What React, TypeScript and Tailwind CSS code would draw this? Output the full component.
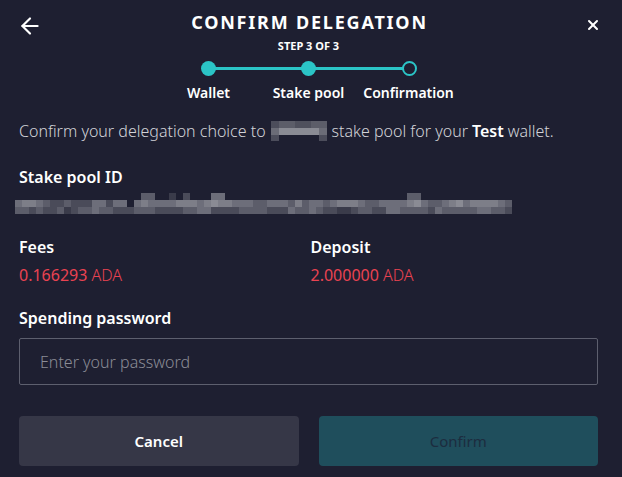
import { ArrowLeft, X } from "lucide-react";

const steps = ["Wallet", "Stake pool", "Confirmation"];

const greys = ["#1e1f31", "#3a3b4a", "#4a4b59", "#5c5d6a", "#6d6e7a", "#7d7e88", "#8a8b94"];

// blurred stake pool id, 3 rows of 7px blocks
const idRows = [
  "00000000000000000033001020004400000000000000000000000000330000000000000",
  "45543223222442440454444555456554443344435344345554334444564334564555543",
  "33232231233433222333222233442222333322243343221123322443333243333344332",
];

function Pixels({ rows }: { rows: string[] }) {
  return (
    <div className="flex flex-col">
      {rows.map((row, r) => (
        <div key={r} className="flex">
          {row.split("").map((c, i) => (
            <div key={i} className="w-[7px] h-[7px]" style={{ background: greys[Number(c)] }} />
          ))}
        </div>
      ))}
    </div>
  );
}

function Amount({ value }: { value: string }) {
  return (
    <p className="mt-[8px] text-[16px] leading-[20px] text-[#ea4352]">
      {value} <span className="font-light">ADA</span>
    </p>
  );
}

export default function App() {
  return (
    <div className="w-[622px] h-[477px] bg-[#1e1f31] text-white font-['Noto_Sans',sans-serif] pl-[19px] pr-[24px] overflow-hidden">
      <div className="grid grid-cols-[40px_1fr_40px] items-start pt-[10px]">
        <ArrowLeft size={26} strokeWidth={2} className="mt-[3px] -ml-[2px]" />
        <div className="flex flex-col items-center">
          <h1 className="text-[18px] leading-[24px] font-bold tracking-[1.8px] pl-[2px]">CONFIRM DELEGATION</h1>
          <p className="text-[11px] leading-[14px] font-bold mt-[5px]">STEP 3 OF 3</p>
        </div>
        <X size={16} strokeWidth={3} className="justify-self-end mt-[7px] -mr-[3px]" />
      </div>

      <div className="flex justify-center mt-[7px]">
        <div className="relative w-[216px] h-[16px] flex items-center justify-between">
          <div className="absolute left-[8px] right-[8px] top-[7px] h-[3px] bg-[#2bc4c6]" />
          <div className="relative w-[15px] h-[15px] rounded-full bg-[#2bc4c6]" />
          <div className="relative w-[15px] h-[15px] rounded-full bg-[#2bc4c6]" />
          <div className="relative w-[15px] h-[15px] rounded-full bg-[#1e1f31] border-2 border-[#2bc4c6]" />
        </div>
      </div>
      <div className="flex justify-center mt-[8px]">
        <div className="grid grid-cols-3 w-[300px]">
          {steps.map((s) => (
            <span key={s} className="text-center text-[14px] leading-[18px] font-semibold">
              {s}
            </span>
          ))}
        </div>
      </div>

      <p className="mt-[19px] text-[16px] leading-[20px] font-light text-[#d2d3d8] flex items-center">
        Confirm your delegation choice to
        <span className="inline-flex mx-[5px] h-[20px] w-[56px] flex-col">
          <span className="flex h-[7px]">
            <span className="w-[8px] bg-[#4c4d5b]" />
            <span className="w-[16px] bg-[#5c5d69]" />
            <span className="w-[16px] bg-[#4f505d]" />
            <span className="w-[16px] bg-[#5c5d69]" />
          </span>
          <span className="flex h-[7px]">
            <span className="w-[8px] bg-[#6b6c77]" />
            <span className="w-[40px] bg-[#8a8b94]" />
            <span className="w-[8px] bg-[#6b6c77]" />
          </span>
          <span className="flex h-[6px]">
            <span className="w-[8px] bg-[#4c4d5b]" />
            <span className="w-[40px] bg-[#1e1f31]" />
            <span className="w-[8px] bg-[#4c4d5b]" />
          </span>
        </span>
        stake pool for your <b className="font-semibold text-white mx-[4px]">Test</b> wallet.
      </p>

      <h2 className="mt-[26px] text-[16px] leading-[20px] font-semibold">Stake pool ID</h2>
      <div className="mt-[6px] -ml-[4px]">
        <Pixels rows={idRows} />
      </div>

      <div className="grid grid-cols-2 mt-[23px]">
        <div>
          <h3 className="text-[16px] leading-[20px] font-semibold">Fees</h3>
          <Amount value="0.166293" />
        </div>
        <div className="pl-[2px]">
          <h3 className="text-[16px] leading-[20px] font-semibold">Deposit</h3>
          <Amount value="2.000000" />
        </div>
      </div>

      <h3 className="mt-[23px] text-[16px] leading-[20px] font-semibold">Spending password</h3>
      <input
        type="password"
        placeholder="Enter your password"
        className="mt-[10px] w-full h-[47px] rounded-[2px] border border-[#5d5f6e] bg-transparent px-[20px] text-[16px] font-light placeholder:text-[#8b8c96] outline-none"
      />

      <div className="grid grid-cols-2 gap-[20px] mt-[31px]">
        <button className="h-[50px] rounded-[4px] bg-[#363747] text-[15px] font-semibold">Cancel</button>
        <button className="h-[50px] rounded-[4px] bg-[#1f4e5c] text-[15px] text-[#1c2c3f]">Confirm</button>
      </div>
    </div>
  );
}
